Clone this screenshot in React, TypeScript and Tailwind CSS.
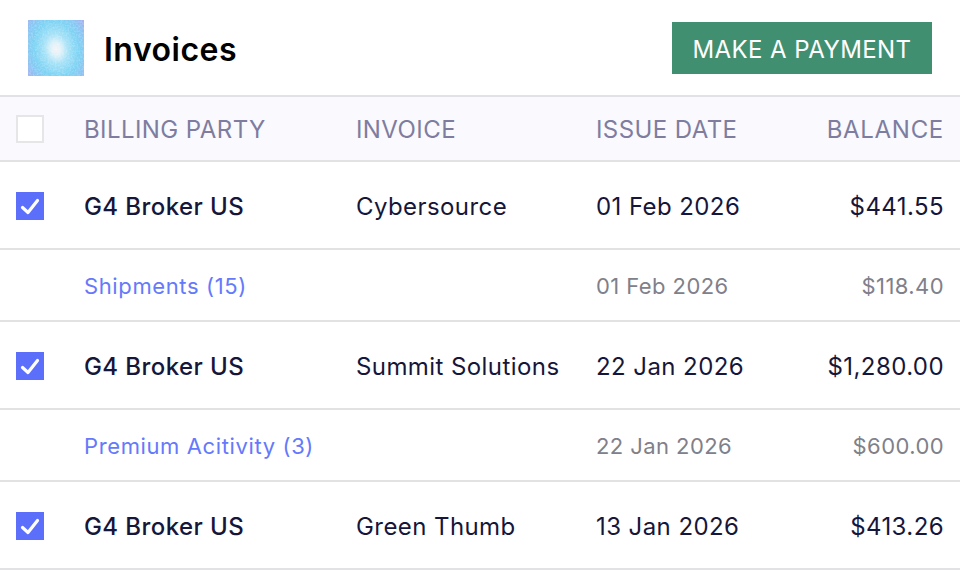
import React from 'react';

type Invoice = {
  party: string;
  invoice: string;
  date: string;
  balance: string;
  detail: string;
  detailDate: string;
  detailBalance: string;
};

const invoices: Invoice[] = [
  { party: 'G4 Broker US', invoice: 'Cybersource', date: '01 Feb 2026', balance: '$441.55', detail: 'Shipments (15)', detailDate: '01 Feb 2026', detailBalance: '$118.40' },
  { party: 'G4 Broker US', invoice: 'Summit Solutions', date: '22 Jan 2026', balance: '$1,280.00', detail: 'Premium Acitivity (3)', detailDate: '22 Jan 2026', detailBalance: '$600.00' },
  { party: 'G4 Broker US', invoice: 'Green Thumb', date: '13 Jan 2026', balance: '$413.26', detail: '', detailDate: '', detailBalance: '' },
];

function Checkbox({ checked }: { checked?: boolean }) {
  if (!checked) {
    return <div className="w-7 h-7 bg-white border-2 border-[#e6e6e9]" />;
  }
  return (
    <div className="w-7 h-7 -mt-[2px] bg-[#5b6ffb] flex items-center justify-center">
      <svg viewBox="0 0 28 28" className="w-7 h-7" fill="none">
        <path d="M6.5 15.5 L12 20.5 L21.5 8.5" stroke="white" strokeWidth="3.2" strokeLinecap="round" strokeLinejoin="round" />
      </svg>
    </div>
  );
}

function Logo() {
  return (
    <svg viewBox="0 0 56 56" className="w-14 h-14">
      <defs>
        <radialGradient
          id="logoGlow"
          gradientUnits="userSpaceOnUse"
          cx="28"
          cy="29"
          r="48"
          gradientTransform="translate(28 28) rotate(-12) scale(0.78 1) translate(-28 -28)"
        >
          <stop offset="0%" stopColor="#f6f3f6" />
          <stop offset="13%" stopColor="#dff2f9" />
          <stop offset="32%" stopColor="#a4e1f7" />
          <stop offset="58%" stopColor="#7dd3f4" />
          <stop offset="78%" stopColor="#8ac6f3" />
          <stop offset="100%" stopColor="#a4aeef" />
        </radialGradient>
        <filter id="logoNoise" x="0" y="0" width="100%" height="100%">
          <feTurbulence type="fractalNoise" baseFrequency="0.55" numOctaves="2" seed="4" />
          <feColorMatrix values="0 0 0 0 1  0 0 0 0 1  0 0 0 0 1  2.4 0 0 0 -0.9" />
        </filter>
      </defs>
      <rect width="56" height="56" fill="url(#logoGlow)" />
      <rect width="56" height="56" filter="url(#logoNoise)" opacity="0.22" />
    </svg>
  );
}

export default function App() {
  return (
    <div className="w-[960px] h-[570px] overflow-hidden bg-white font-['Inter',sans-serif] text-[24px] tracking-[0.42px] text-[#16163a]">
      <div className="h-[95px] flex items-center justify-between pl-7 pr-7">
        <div className="flex items-center gap-5">
          <Logo />
          <h1 className="pt-1 text-[32px] font-semibold tracking-[0.5px] text-black">Invoices</h1>
        </div>
        <button className="w-[260px] h-[52px] pt-1 bg-[#418f71] text-white">MAKE A PAYMENT</button>
      </div>

      <div className="h-[67px] flex items-center border-y-2 border-[#e2e2e4] bg-[#f9f9fe] text-[#7e7d9f]">
        <div className="w-[84px] pl-4"><Checkbox /></div>
        <div className="w-[272px] pt-[2px]">BILLING PARTY</div>
        <div className="w-[240px] pt-[2px]">INVOICE</div>
        <div className="w-[190px] pt-[2px]">ISSUE DATE</div>
        <div className="flex-1 pt-[2px] text-right pr-4 tracking-[0.7px]">BALANCE</div>
      </div>

      {invoices.map((row, index) => (
        <div key={index}>
          <div className="h-[88px] pt-1 flex items-center border-b-2 border-[#e2e2e4]">
            <div className="w-[84px] pl-4"><Checkbox checked /></div>
            <div className="w-[272px] font-medium">{row.party}</div>
            <div className="w-[240px]">{row.invoice}</div>
            <div className="w-[190px]">{row.date}</div>
            <div className="flex-1 text-right pr-4">{row.balance}</div>
          </div>
          {row.detail && (
            <div className="h-[72px] pt-[2px] flex items-center border-b-2 border-[#e2e2e4] text-[#80808a] text-[22px]">
              <div className="w-[84px]" />
              <div className="w-[512px] tracking-[0.62px] text-[#6579fb]">{row.detail}</div>
              <div className="w-[190px]">{row.detailDate}</div>
              <div className="flex-1 text-right pr-4">{row.detailBalance}</div>
            </div>
          )}
        </div>
      ))}
    </div>
  );
}
